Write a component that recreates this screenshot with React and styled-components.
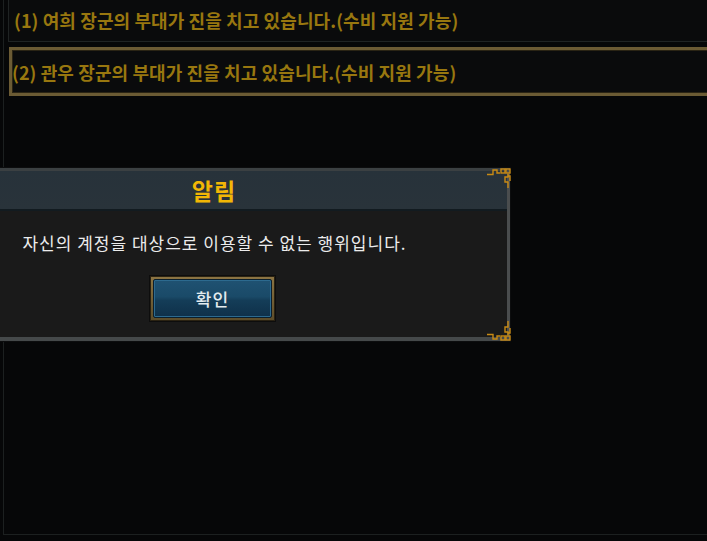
import React from "react";
import styled, { createGlobalStyle } from "styled-components";

const Global = createGlobalStyle`
  html, body { margin: 0; padding: 0; background: #060708; overflow: hidden; }
  body { font-family: "Noto Sans CJK KR", "Noto Sans", sans-serif; }
`;

const Screen = styled.div`
  position: relative;
  width: 707px;
  height: 541px;
  background: #060708;
  overflow: hidden;
`;

const Panel = styled.div`
  position: absolute;
  left: 3px;
  top: -20px;
  width: 760px;
  height: 555px;
  border-left: 1px solid #1c2020;
  border-bottom: 1px solid #1c2020;
  box-sizing: border-box;
  padding: 0 0 0 4px;
  display: flex;
  flex-direction: column;
  gap: 5px;
`;

const Row = styled.div`
  box-sizing: border-box;
  height: ${(p) => p.$h}px;
  display: flex;
  align-items: center;
  padding-left: ${(p) => (p.$active ? 0 : 5)}px;
  padding-top: ${(p) => p.$pt || 0}px;
  background: #0a0b0c;
  border: ${(p) => (p.$active ? "3px solid #6b5b34" : "1px solid #1f2323")};
  box-shadow: ${(p) => (p.$active ? "inset 0 0 0 1px #2a2414" : "none")};
  margin-left: ${(p) => (p.$active ? 1 : 0)}px;
`;

const RowText = styled.span`
  color: #98770f;
  font-size: 18px;
  font-weight: 700;
  letter-spacing: 0.1px;
  white-space: nowrap;
`;

const Dialog = styled.div`
  position: absolute;
  left: -82px;
  top: 168px;
  width: 592px;
  height: 173px;
  box-sizing: border-box;
  border-top: 3px solid #3b4042;
  border-bottom: 4px solid #45494a;
  border-right: 3px solid #4a4d4e;
  background: #1a1a1a;
  display: flex;
  flex-direction: column;
  box-shadow: 0 0 0 1px #0c0d0e;
`;

const Header = styled.div`
  height: 38px;
  background: linear-gradient(#27323a, #29333a);
  border-bottom: 2px solid #121b20;
  display: flex;
  align-items: center;
  justify-content: center;
`;

const Title = styled.h1`
  margin: 0;
  padding-left: 3px;
  color: #f2b705;
  font-size: 23px;
  font-weight: 700;
  letter-spacing: 1px;
`;

const Body = styled.div`
  flex: 1;
  display: flex;
  flex-direction: column;
  align-items: center;
  padding-top: 18px;
  gap: 19px;
`;

const Message = styled.p`
  margin: 0;
  padding-left: 4px;
  color: #ececec;
  font-size: 17px;
  letter-spacing: 1px;
  line-height: 28px;
`;

const ButtonFrame = styled.div`
  padding: 2px;
  background: linear-gradient(#8b7443, #5d4d2a);
  border: 1px solid #2a2212;
  box-shadow: 0 0 0 1px #0d0d0d;
`;

const Button = styled.button`
  width: 119px;
  height: 39px;
  border: 1px solid #0b1e2b;
  border-radius: 2px;
  background: linear-gradient(#1f5272 0%, #1a4a68 45%, #143d58 55%, #0f3049 100%);
  box-shadow: inset 0 0 0 1px #2c6a8f;
  color: #e4ecef;
  font-family: "Noto Sans CJK KR", sans-serif;
  font-size: 17px;
  font-weight: 500;
  letter-spacing: 1px;
  cursor: pointer;
`;

const Corner = styled.svg`
  position: absolute;
  right: -4px;
  ${(p) => (p.$bottom ? "bottom: -4px;" : "top: -3px;")}
  width: 24px;
  height: 28px;
`;

function Ornament({ bottom }) {
  return (
    <Corner $bottom={bottom} viewBox="0 0 24 28">
      <g
        fill="none"
        stroke="#c88a14"
        strokeWidth="1.4"
        transform={bottom ? "translate(0,28) scale(1,-1)" : undefined}
      >
        <path d="M0 6.5 H6 V2 H10 V5 H13" />
        <rect x="14" y="1" width="4" height="4" />
        <rect x="19" y="1" width="4" height="4" />
        <path d="M21 6 V9 H18 V14 H21 V20" />
        <path d="M21 8 H23 V13" />
      </g>
    </Corner>
  );
}

export default function App() {
  return (
    <Screen>
      <Global />
      <Panel>
        <Row $h={62} $pt={18}>
          <RowText>(1) 여희 장군의 부대가 진을 치고 있습니다.(수비 지원 가능)</RowText>
        </Row>
        <Row $h={49} $active>
          <RowText>(2) 관우 장군의 부대가 진을 치고 있습니다.(수비 지원 가능)</RowText>
        </Row>
      </Panel>
      <Dialog>
        <Header>
          <Title>알림</Title>
        </Header>
        <Body>
          <Message>자신의 계정을 대상으로 이용할 수 없는 행위입니다.</Message>
          <ButtonFrame>
            <Button>확인</Button>
          </ButtonFrame>
        </Body>
        <Ornament />
        <Ornament bottom />
      </Dialog>
    </Screen>
  );
}
